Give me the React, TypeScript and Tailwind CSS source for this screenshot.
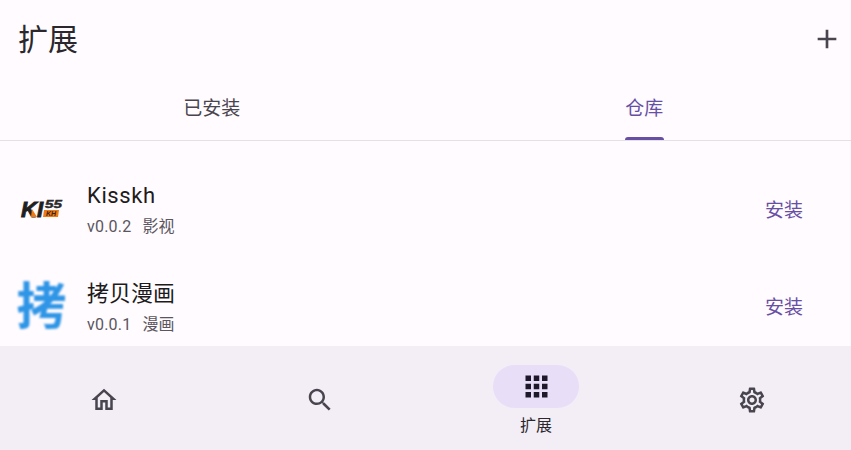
const cjk = "font-['Roboto','Noto_Sans_CJK_SC',sans-serif]";

function KissLogo() {
  return (
    <svg width="47" height="24" viewBox="0 0 47 24" className="shrink-0">
      <g fontFamily="Liberation Sans" fontWeight="700" fontStyle="italic">
        <text x="3" y="19" fontSize="22" fill="#1f1f1f" stroke="#1f1f1f" strokeWidth="0.9">K</text>
        <polygon points="14,11 19,19 13,19" fill="#ee7a16" />
        <text x="19" y="19" fontSize="22" fill="#1f1f1f" stroke="#1f1f1f" strokeWidth="0.9">I</text>
        <text x="27" y="10" fontSize="10.5" fill="#2a2a2a" stroke="#2a2a2a" strokeWidth="0.4" textLength="17" lengthAdjust="spacingAndGlyphs">55</text>
        <polygon points="26,12 41,12 40,19 25,19" fill="#ee7a16" />
        <text x="28" y="18.3" fontSize="7" fill="#3a2412">KH</text>
      </g>
    </svg>
  );
}

function Row({
  logo,
  name,
  version,
  kind,
  titleClass = "",
}: {
  logo: React.ReactNode;
  name: string;
  version: string;
  kind: string;
  titleClass?: string;
}) {
  return (
    <div className="flex h-[97px] items-center pl-[18px] pr-[48px]">
      <div className="flex w-[47px] justify-center">{logo}</div>
      <div className="ml-[22px] flex-1 pt-[2px]">
        <div className={`text-[22px] leading-[28px] text-[#1d1b20] ${titleClass}`}>{name}</div>
        <div className="mt-[6px] flex gap-[11px] text-[16px] leading-[22px] tracking-[0.2px] text-[#5a5660]">
          <span>{version}</span>
          <span>{kind}</span>
        </div>
      </div>
      <span className="mt-[4px] text-[19px] text-[#6750a4]">安装</span>
    </div>
  );
}

export default function App() {
  return (
    <div className={`flex h-[450px] w-[851px] flex-col overflow-hidden bg-[#fffbfe] ${cjk}`}>
      {/* App bar */}
      <div className="flex h-[80px] items-center justify-between pl-[18px] pr-[8px]">
        <h1 className="text-[30px] leading-none text-[#2a282d]">扩展</h1>
        <svg width="32" height="32" viewBox="0 0 24 24" fill="#49454f" className="-mt-[2px]">
          <path d="M19 13h-6v6h-2v-6H5v-2h6V5h2v6h6v2z" />
        </svg>
      </div>

      {/* Tabs */}
      <div className="flex h-[61px] border-b border-[#e4e0e8]">
        <div className="flex w-1/2 items-center justify-center pb-[1px] pr-[2px] text-[19px] text-[#49454f]">已安装</div>
        <div className="relative flex w-1/2 items-center justify-center pb-[1px] pl-[12px] text-[19px] text-[#6750a4]">
          仓库
          <div className="absolute bottom-0 left-[199px] h-[3px] w-[39px] rounded-t-[3px] bg-[#6750a4]" />
        </div>
      </div>

      {/* List */}
      <div className="flex-1 overflow-hidden pt-[20px]">
        <Row logo={<KissLogo />} name="Kisskh" version="v0.0.2" kind="影视" titleClass="-mt-[2px] mb-[2px] text-[21px] tracking-[0.6px]" />
        <Row
          logo={<span className="text-[50px] font-bold leading-none text-[#2f95e6] blur-[1.2px]">拷</span>}
          name="拷贝漫画"
          version="v0.0.1"
          kind="漫画"
        />
      </div>

      {/* Bottom navigation */}
      <nav className="flex h-[104px] shrink-0 justify-between bg-[#f3eef6] pl-[61px] pr-[56px] pt-[19px]">
        <div className="flex h-[70px] w-[86px] items-center justify-center">
          <svg width="30" height="30" viewBox="0 0 24 24" fill="#49454f">
            <path d="M12 5.69l5 4.5V18h-2v-6H9v6H7v-7.81l5-4.5M12 3L2 12h3v8h6v-6h2v6h6v-8h3L12 3z" />
          </svg>
        </div>
        <div className="flex h-[70px] w-[86px] items-center justify-center">
          <svg width="30" height="30" viewBox="0 0 24 24" fill="#49454f">
            <path d="M15.5 14h-.79l-.28-.27C15.41 12.59 16 11.11 16 9.5 16 5.91 13.09 3 9.5 3S3 5.91 3 9.5 5.91 16 9.5 16c1.61 0 3.09-.59 4.23-1.57l.27.28v.79l5 4.99L20.49 19l-4.99-5zm-6 0C7.01 14 5 11.99 5 9.5S7.01 5 9.5 5 14 7.01 14 9.5 11.99 14 9.5 14z" />
          </svg>
        </div>
        <div className="flex w-[86px] flex-col items-center">
          <div className="flex h-[43px] w-[86px] items-center justify-center rounded-full bg-[#e8def8]">
            <svg width="33" height="33" viewBox="0 0 24 24" fill="#1d192b">
              <path d="M4 8h4V4H4v4zm6 12h4v-4h-4v4zm-6 0h4v-4H4v4zm0-6h4v-4H4v4zm6 0h4v-4h-4v4zm6-10v4h4V4h-4zm-6 4h4V4h-4v4zm6 6h4v-4h-4v4zm0 6h4v-4h-4v4z" />
            </svg>
          </div>
          <span className="mt-[7px] text-[16px] leading-[22px] text-[#2a282d]">扩展</span>
        </div>
        <div className="flex h-[70px] w-[86px] items-center justify-center">
          <svg width="30" height="30" viewBox="0 0 24 24" fill="#49454f">
            <path d="M19.43 12.98c.04-.32.07-.64.07-.98s-.03-.66-.07-.98l2.11-1.65c.19-.15.24-.42.12-.64l-2-3.46c-.12-.22-.39-.3-.61-.22l-2.49 1c-.52-.4-1.08-.73-1.69-.98l-.38-2.65C14.46 2.18 14.25 2 14 2h-4c-.25 0-.46.18-.49.42l-.38 2.65c-.61.25-1.17.59-1.69.98l-2.49-1c-.23-.09-.49 0-.61.22l-2 3.46c-.13.22-.07.49.12.64l2.11 1.65c-.04.32-.07.65-.07.98s.03.66.07.98l-2.11 1.65c-.19.15-.24.42-.12.64l2 3.46c.12.22.39.3.61.22l2.49-1c.52.4 1.08.73 1.69.98l.38 2.65c.03.24.24.42.49.42h4c.25 0 .46-.18.49-.42l.38-2.65c.61-.25 1.17-.59 1.69-.98l2.49 1c.23.09.49 0 .61-.22l2-3.46c.12-.22.07-.49-.12-.64l-2.11-1.65zM17.45 11.27c.04.31.05.52.05.73 0 .21-.02.43-.05.73l-.14 1.13.89.7 1.08.84-.7 1.21-1.27-.51-1.04-.42-.9.68c-.43.32-.84.56-1.25.73l-1.06.43-.16 1.13-.2 1.35h-1.4l-.19-1.35-.16-1.13-1.06-.43c-.43-.18-.83-.41-1.23-.71l-.91-.7-1.06.43-1.27.51-.7-1.21 1.08-.84.89-.7-.14-1.13c-.03-.31-.05-.54-.05-.74s.02-.43.05-.73l.14-1.13-.89-.7-1.08-.84.7-1.21 1.27.51 1.04.42.9-.68c.43-.32.84-.56 1.25-.73l1.06-.43.16-1.13.2-1.35h1.39l.19 1.35.16 1.13 1.06.43c.43.18.83.41 1.23.71l.91.7 1.06-.43 1.27-.51.7 1.21-1.07.85-.89.7.14 1.13zM12 8c-2.21 0-4 1.79-4 4s1.79 4 4 4 4-1.79 4-4-1.79-4-4-4zm0 6c-1.1 0-2-.9-2-2s.9-2 2-2 2 .9 2 2-.9 2-2 2z" />
          </svg>
        </div>
      </nav>
    </div>
  );
}
